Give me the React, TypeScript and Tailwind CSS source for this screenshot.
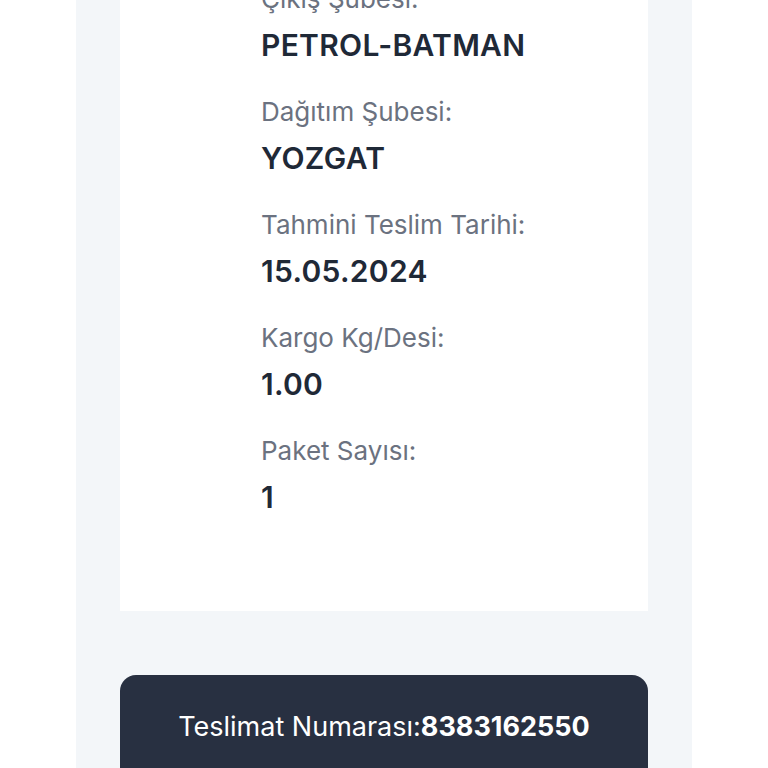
const details = [
  { label: "Çıkış Şubesi:", value: "PETROL-BATMAN" },
  { label: "Dağıtım Şubesi:", value: "YOZGAT" },
  { label: "Tahmini Teslim Tarihi:", value: "15.05.2024" },
  { label: "Kargo Kg/Desi:", value: "1.00" },
  { label: "Paket Sayısı:", value: "1" },
];

export default function App() {
  return (
    <div
      className="flex min-h-screen w-full justify-center overflow-hidden bg-white"
      style={{ fontFamily: "Inter, 'Open Sans', sans-serif" }}
    >
      <div className="flex w-[616px] flex-col bg-[#f3f6f9] px-[44px] pb-10">
        {/* shipment details card (scrolled, top is out of view) */}
        <div className="-mt-[92px] flex flex-col bg-white pb-[70px] pl-[141px] pt-[68px]">
          {details.map((item) => (
            <div key={item.label} className="flex flex-col pb-[21px]">
              <span className="text-[26px] leading-[46px] text-[#6b7280]">{item.label}</span>
              <span className="text-[30px] font-semibold leading-[46px] tracking-[0.3px] text-[#1f2937]">
                {item.value}
              </span>
            </div>
          ))}
        </div>

        {/* delivery number */}
        <div className="mt-[64px] flex h-[160px] justify-center rounded-t-2xl bg-[#283041] pt-[35px]">
          <p className="text-[27px] leading-[34px] text-white">
            Teslimat Numarası:<span className="font-bold">8383162550</span>
          </p>
        </div>
      </div>
    </div>
  );
}
